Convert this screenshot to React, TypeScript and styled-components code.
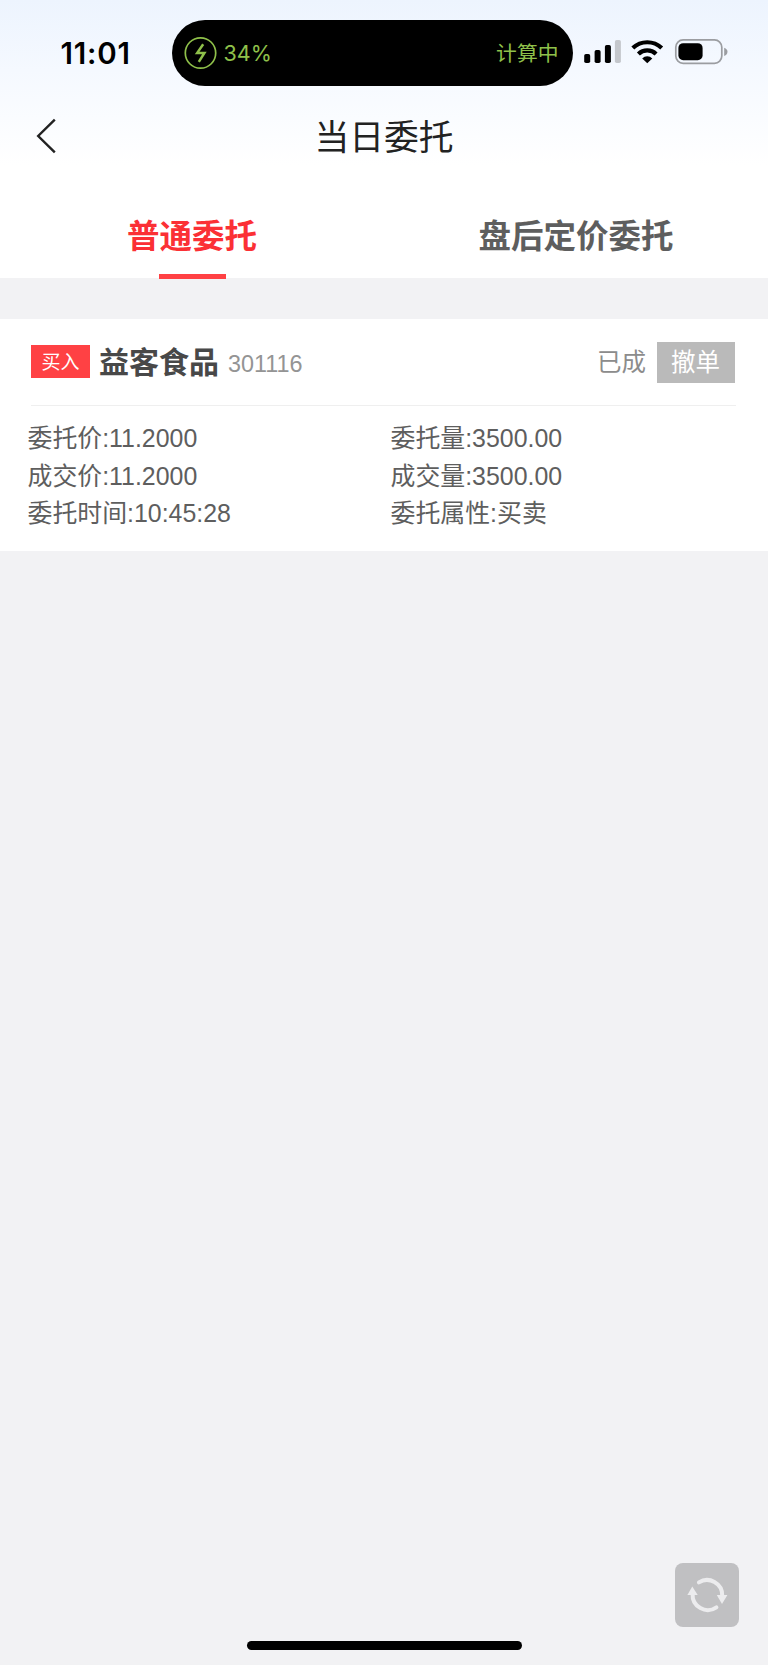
import React from "react";
import styled, { createGlobalStyle } from "styled-components";

const GlobalStyle = createGlobalStyle`
  * { box-sizing: border-box; }
  body {
    margin: 0;
    background: #f2f2f4;
    font-family: "Liberation Sans", "Noto Sans CJK SC", sans-serif;
  }
`;

const Screen = styled.div`
  display: flex;
  flex-direction: column;
  width: 768px;
  height: 1665px;
  background: #f2f2f4;
`;

const Header = styled.header`
  height: 278px;
  flex: none;
  display: flex;
  flex-direction: column;
  background: linear-gradient(180deg, #edf4fe 0, #f5f9ff 70px, #ffffff 165px);
`;

const StatusBar = styled.div`
  height: 86px;
  padding: 20px 36px 0 60.5px;
  display: flex;
  align-items: flex-start;
`;

const Clock = styled.time`
  width: 111px;
  flex: none;
  line-height: 66px;
  font-family: Inter, sans-serif;
  font-weight: 600;
  font-size: 29.5px;
  letter-spacing: 0.8px;
  color: #000;
`;

const Island = styled.div`
  width: 401px;
  height: 66px;
  flex: none;
  border-radius: 33px;
  padding: 0 14px 0 12px;
  display: flex;
  align-items: center;
  background: #000;
  color: #8fc04a;
`;

const Percent = styled.span`
  flex: 1;
  margin-left: 7px;
  font-family: Inter, sans-serif;
  font-size: 21.5px;
  line-height: 66px;
`;

const Calculating = styled.span`
  font-family: "Noto Sans CJK SC", sans-serif;
  font-size: 20.8px;
  line-height: 64px;
  margin-bottom: 2px;
`;

const Indicators = styled.div`
  display: flex;
  flex: none;
  margin: 19px 0 0 11.5px;
`;

const NavBar = styled.nav`
  height: 100px;
  display: grid;
  grid-template-columns: 100px 1fr 100px;
  align-items: center;
`;

const BackButton = styled.button`
  width: 30px;
  height: 40px;
  margin-left: 32px;
  padding: 0;
  border: 0;
  background: none;
  display: flex;
`;

const Title = styled.h1`
  margin: 0;
  text-align: center;
  font-family: "Noto Sans CJK SC", sans-serif;
  font-weight: 400;
  font-size: 34.8px;
  line-height: 98px;
  height: 100px;
  color: #222;
`;

const Tabs = styled.div`
  flex: 1;
  display: grid;
  grid-template-columns: 1fr 1fr;
`;

const Tab = styled.div<{ $active?: boolean }>`
  display: flex;
  flex-direction: column;
  align-items: center;
  font-family: "Noto Sans CJK SC", sans-serif;
  font-weight: 700;
  font-size: 32.5px;
  line-height: 48px;
  padding-top: 24px;
  color: ${(p) => (p.$active ? "#fb3035" : "#5e5e5e")};
`;

const Underline = styled.span`
  width: 67px;
  height: 5px;
  margin-top: 16px;
  background: #ff4144;
  z-index: 1;
`;

const OrderCard = styled.section`
  margin-top: 41px;
  height: 232px;
  flex: none;
  background: #fff;
`;

const OrderHead = styled.div`
  height: 87px;
  margin: 0 32px 0 31px;
  padding-right: 1px;
  display: flex;
  align-items: center;
  border-bottom: 1px solid #efefef;
  font-family: "Noto Sans CJK SC", sans-serif;
`;

const SideTag = styled.span`
  width: 59px;
  height: 33px;
  margin-bottom: 2px;
  background: #ff4144;
  color: #fff;
  font-size: 19px;
  line-height: 32px;
  text-align: center;
`;

const StockName = styled.strong`
  margin: 0 0 5px 9px;
  font-size: 30px;
  line-height: 44px;
  color: #484848;
`;

const StockCode = styled.span`
  margin-left: 9px;
  flex: 1;
  font-family: "Liberation Sans", sans-serif;
  font-size: 23.4px;
  line-height: 30px;
  padding-top: 4px;
  color: #949494;
`;

const OrderState = styled.span`
  margin-bottom: 2px;
  font-size: 24.5px;
  line-height: 40px;
  color: #8c8c8c;
`;

const CancelButton = styled.button`
  width: 78px;
  height: 41px;
  margin-left: 11px;
  padding: 0 1px 3px 0;
  border: 0;
  background: #bababa;
  color: #fff;
  font-family: inherit;
  font-size: 24.5px;
  line-height: 38px;
`;

const Details = styled.div`
  display: grid;
  grid-template-columns: 363px 1fr;
  grid-auto-rows: 37.5px;
  padding: 14.2px 0 0 27.5px;
`;

const Detail = styled.div`
  font-size: 24.9px;
  line-height: 37.5px;
  white-space: nowrap;
  color: #5e5e5e;
`;

const Footer = styled.footer`
  flex: 1;
  display: flex;
  flex-direction: column;
  justify-content: flex-end;
  align-items: center;
  padding-bottom: 15px;
`;

const RefreshButton = styled.button`
  align-self: flex-end;
  width: 64px;
  height: 64px;
  margin: 0 29px 14px 0;
  padding: 0;
  border: 0;
  border-radius: 8px;
  background: #c0c0c2;
  display: flex;
`;

const HomeIndicator = styled.div`
  width: 275px;
  height: 9px;
  border-radius: 5px;
  background: #000;
`;

const BoltIcon = () => (
  <svg width="33" height="34" viewBox="0 0 33 34" fill="none" stroke="#8fc04a">
    <circle cx="16.5" cy="17" r="15.2" strokeWidth="1.7" />
    <path d="M19.2 8.2 L13.2 16.9 H20.4 L14.8 25.8" strokeWidth="2.5" />
  </svg>
);

const StatusIcons = () => (
  <svg width="146" height="26" viewBox="584 39 146 26">
    <rect x="584.2" y="54" width="6" height="9" rx="1.8" />
    <rect x="594.6" y="50" width="6" height="13" rx="1.8" />
    <rect x="604.9" y="45" width="6" height="18" rx="1.8" />
    <rect x="614.9" y="40" width="6" height="23" rx="1.8" fill="#c4c7cc" />
    <g fill="none" stroke="#000" strokeWidth="4.2">
      <path d="M632.8 48.1 A20.8 20.8 0 0 1 661.7 48.1" />
      <path d="M638.4 53.9 A12.7 12.7 0 0 1 656.1 53.9" />
    </g>
    <path d="M647.25 63.2 L642.2 58.4 A7.3 7.3 0 0 1 652.3 58.4 Z" />
    <rect x="675.8" y="39.9" width="46" height="23.4" rx="7.3" fill="none" stroke="#9b9da1" strokeWidth="1.7" />
    <rect x="678.4" y="43.2" width="24.2" height="17" rx="4.8" />
    <path d="M724.2 47.8 C728.6 49.2 728.6 54.6 724.2 56 Z" fill="#9b9da1" />
  </svg>
);

const BackIcon = () => (
  <svg width="30" height="40" viewBox="32 116 30 40" fill="none" stroke="#222" strokeWidth="2.4">
    <path d="M54.8 119.6 L38.2 136 L54.8 152.4" />
  </svg>
);

const RefreshIcon = () => (
  <svg width="64" height="64" viewBox="0 0 64 64" fill="none" stroke="#ececee" strokeWidth="4" strokeLinecap="round">
    <path d="M23.9 19.4 A15.2 15.2 0 0 1 47.2 32.5" />
    <path d="M41.4 44.3 A15.2 15.2 0 0 1 17.6 31" />
    <path d="M41.8 32 H52.4 L47 41 Z" fill="#ececee" stroke="none" />
    <path d="M12.4 32 H22.7 L17.3 23.6 Z" fill="#ececee" stroke="none" />
  </svg>
);

const orderDetails = [
  ["委托价", "11.2000"],
  ["委托量", "3500.00"],
  ["成交价", "11.2000"],
  ["成交量", "3500.00"],
  ["委托时间", "10:45:28"],
  ["委托属性", "买卖"],
];

export default function App() {
  return (
    <Screen lang="zh-CN">
      <GlobalStyle />
      <Header>
        <StatusBar>
          <Clock>11:01</Clock>
          <Island>
            <BoltIcon />
            <Percent>34%</Percent>
            <Calculating>计算中</Calculating>
          </Island>
          <Indicators>
            <StatusIcons />
          </Indicators>
        </StatusBar>
        <NavBar>
          <BackButton aria-label="返回">
            <BackIcon />
          </BackButton>
          <Title>当日委托</Title>
        </NavBar>
        <Tabs>
          <Tab $active>
            普通委托
            <Underline />
          </Tab>
          <Tab>盘后定价委托</Tab>
        </Tabs>
      </Header>
      <OrderCard>
        <OrderHead>
          <SideTag>买入</SideTag>
          <StockName>益客食品</StockName>
          <StockCode>301116</StockCode>
          <OrderState>已成</OrderState>
          <CancelButton>撤单</CancelButton>
        </OrderHead>
        <Details>
          {orderDetails.map(([label, value]) => (
            <Detail key={label}>
              {label}:{value}
            </Detail>
          ))}
        </Details>
      </OrderCard>
      <Footer>
        <RefreshButton aria-label="刷新">
          <RefreshIcon />
        </RefreshButton>
        <HomeIndicator />
      </Footer>
    </Screen>
  );
}
